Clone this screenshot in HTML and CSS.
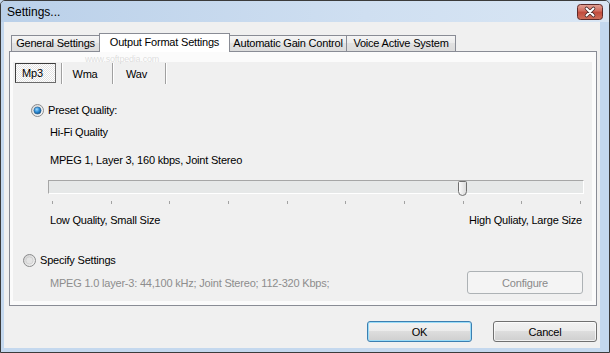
FILE: index.html
```html
<!DOCTYPE html>
<html lang="en">
<head>
    <meta charset="UTF-8">
    <title>Settings...</title>
    <link rel="stylesheet" href="styles.css">
</head>
<body>
    <div class="window">
        <!-- Title bar -->
        <div class="titlebar">
            <span class="title">Settings...</span>
            <svg class="close" width="26" height="16" viewBox="0 0 26 16">
                <defs>
                    <linearGradient id="closeBg" x1="0" y1="0" x2="0" y2="1">
                        <stop offset="0" stop-color="#e3a497"/>
                        <stop offset="0.45" stop-color="#d06a5c"/>
                        <stop offset="0.5" stop-color="#c04a3b"/>
                        <stop offset="1" stop-color="#d0705c"/>
                    </linearGradient>
                </defs>
                <rect x="0.5" y="0.5" width="25" height="15" rx="3" fill="url(#closeBg)" stroke="#5e2a2a"/>
                <path d="M9.5 4.5 L16.5 11.5 M16.5 4.5 L9.5 11.5" stroke="#4a2a2a" stroke-width="3.6" stroke-linecap="round"/>
                <path d="M9.5 4.5 L16.5 11.5 M16.5 4.5 L9.5 11.5" stroke="#fff" stroke-width="2" stroke-linecap="round"/>
            </svg>
        </div>

        <div class="client">
            <!-- Tabs -->
            <div class="tabs">
                <div class="tab tab-general">General Settings</div>
                <div class="tab tab-output active">Output Format Settings</div>
                <div class="tab tab-agc">Automatic Gain Control</div>
                <div class="tab tab-voice">Voice Active System</div>
            </div>

            <div class="panel">
                <div class="page">
                    <div class="subtabs">
                        <div class="subtab subtab-mp3"><div class="pressed">Mp3</div></div>
                        <div class="subtab subtab-wma">Wma</div>
                        <div class="subtab subtab-wav">Wav</div>
                    </div>

                    <div class="option option-preset">
                        <svg width="13" height="13" viewBox="0 0 13 13">
                            <defs>
                                <radialGradient id="dot" cx="0.4" cy="0.35" r="0.7">
                                    <stop offset="0" stop-color="#9fd9ff"/>
                                    <stop offset="0.5" stop-color="#2f8fd8"/>
                                    <stop offset="1" stop-color="#0d4f8a"/>
                                </radialGradient>
                                <linearGradient id="ring" x1="0" y1="0" x2="1" y2="1">
                                    <stop offset="0" stop-color="#d8d8d8"/>
                                    <stop offset="1" stop-color="#fbfbfb"/>
                                </linearGradient>
                            </defs>
                            <circle cx="6.5" cy="6.5" r="6" fill="url(#ring)" stroke="#8a8b8c"/>
                            <circle cx="6.5" cy="6.5" r="3.6" fill="url(#dot)" stroke="#2a5a86" stroke-width="0.6"/>
                        </svg>
                        <span>Preset Quality:</span>
                    </div>

                    <div class="info hifi">Hi-Fi Quality</div>
                    <div class="info mpeg">MPEG 1, Layer 3, 160 kbps, Joint Stereo</div>

                    <div class="slider">
                        <div class="track"></div>
                        <svg class="thumb" width="9" height="15" viewBox="0 0 9 15">
                            <defs>
                                <linearGradient id="thumbBg" x1="0" y1="0" x2="1" y2="0">
                                    <stop offset="0" stop-color="#fdfdfd"/>
                                    <stop offset="1" stop-color="#d9d9d9"/>
                                </linearGradient>
                            </defs>
                            <path d="M1.5 0.5 H7.5 Q8.5 0.5 8.5 1.5 V10.5 Q8.5 14.5 4.5 14.5 Q0.5 14.5 0.5 10.5 V1.5 Q0.5 0.5 1.5 0.5 Z" fill="url(#thumbBg)" stroke="#6f6f6f"/>
                        </svg>
                    </div>
                    <div class="ticks">
                        <span class="tick"></span><span class="tick"></span><span class="tick"></span>
                        <span class="tick"></span><span class="tick"></span><span class="tick"></span>
                        <span class="tick"></span><span class="tick"></span><span class="tick"></span>
                        <span class="tick"></span>
                    </div>
                    <div class="scale-labels">
                        <span>Low Quality, Small Size</span>
                        <span>High Quliaty, Large Size</span>
                    </div>

                    <div class="option option-specify">
                        <svg width="13" height="13" viewBox="0 0 13 13">
                            <defs>
                                <linearGradient id="ringOff" x1="0" y1="0" x2="1" y2="1">
                                    <stop offset="0" stop-color="#cfcfcf"/>
                                    <stop offset="1" stop-color="#f7f7f7"/>
                                </linearGradient>
                            </defs>
                            <circle cx="6.5" cy="6.5" r="6" fill="url(#ringOff)" stroke="#8a8b8c"/>
                            <circle cx="6.5" cy="6.5" r="3.6" fill="#e4e4e4" stroke="#c4c4c4" stroke-width="0.6"/>
                        </svg>
                        <span>Specify Settings</span>
                    </div>

                    <div class="custom-row">
                        <span class="custom-info">MPEG 1.0 layer-3: 44,100 kHz; Joint Stereo; 112-320 Kbps;</span>
                        <button class="configure" disabled>Configure</button>
                    </div>
                </div>
            </div>

            <!-- Dialog buttons -->
            <div class="actions">
                <button class="btn btn-default">OK</button>
                <button class="btn btn-cancel">Cancel</button>
            </div>
        </div>

        <div class="watermark-url">www.softpedia.com</div>
    </div>
</body>
</html>
```

FILE: styles.css
```css
* {
    margin: 0;
    padding: 0;
    box-sizing: border-box;
}

body {
    width: 610px;
    height: 353px;
    overflow: hidden;
    font-family: "Liberation Sans", Arial, sans-serif;
    font-size: 11px;
    letter-spacing: -0.2px;
    color: #000;
    background: #c4d8ee;
}

/* Window frame */
.window {
    width: 610px;
    height: 353px;
    border: 1px solid #3b3b3b;
    border-radius: 5px 5px 0 0;
    background: #c4d8ee;
    display: flex;
    flex-direction: column;
    position: relative;
    overflow: hidden;
}

.titlebar {
    height: 21px;
    display: flex;
    align-items: center;
    justify-content: space-between;
    padding: 1px 6px 0 6px;
    background: linear-gradient(to right, #bad0e9, #cfdff1 60%, #d9e6f4);
}

.title {
    font-size: 12px;
    letter-spacing: 0;
}

.client {
    height: 326px;
    margin: 0 9px 0 3px;
    background: #f0f0f0;
}

/* Tabs */
.tabs {
    display: flex;
    align-items: flex-end;
    height: 29px;
    padding-left: 7px;
}

.tab {
    height: 16px;
    line-height: 15px;
    text-align: center;
    white-space: nowrap;
    border: 1px solid #898c95;
    border-bottom: none;
    margin-left: -1px;
    background: linear-gradient(#f5f5f5, #ebebeb 50%, #e1e1e1 50%, #dcdcdc);
}

.tab-general {
    width: 89px;
    margin-left: 0;
}

.tab-output {
    width: 131px;
}

.tab-agc {
    width: 118px;
}

.tab-voice {
    width: 110px;
}

.tab.active {
    height: 19px;
    line-height: 17px;
    margin-bottom: -1px;
    background: #fff;
    position: relative;
    z-index: 1;
}

.panel {
    margin-left: 5px;
    width: 588px;
    height: 255px;
    border: 1px solid #898c95;
    background: #fbfbfb;
    padding: 10px 4px 4px 3px;
}

.page {
    height: 100%;
    background: #f0f0f0;
    display: flex;
    flex-direction: column;
}

/* Format buttons */
.subtabs {
    display: flex;
    height: 21px;
    margin: 1px 0 0 2px;
}

.subtab {
    height: 21px;
    display: flex;
    align-items: center;
    justify-content: center;
    border-right: 1px solid #a0a0a0;
    box-shadow: 1px 0 0 #fff;
}

.subtab-mp3 {
    width: 47px;
    align-items: flex-start;
    justify-content: flex-start;
}

.subtab-wma {
    width: 51px;
    padding-right: 4px;
}

.subtab-wav {
    width: 53px;
    padding-right: 5px;
}

.pressed {
    width: 41px;
    height: 20px;
    padding: 3px 0 0 6px;
    border: 1px solid #6a6a6a;
    border-top-color: #3c3c3c;
    border-left-color: #3c3c3c;
    background: repeating-conic-gradient(#ffffff 0 25%, #e2e2e2 0 50%) 0 0 / 2px 2px;
}

/* Options */
.option {
    display: flex;
    align-items: center;
    gap: 4px;
    height: 14px;
}

.option-preset {
    margin: 19px 0 0 18px;
}

.option-specify {
    margin: 26px 0 0 10px;
}

.info {
    margin-left: 37px;
    height: 14px;
    line-height: 14px;
}

.hifi {
    margin-top: 8px;
}

.mpeg {
    margin-top: 14px;
}

/* Quality slider */
.slider {
    margin: 13px 0 0 35px;
    width: 536px;
    height: 14px;
    position: relative;
}

.track {
    height: 14px;
    border: 1px solid #a6a6a6;
    border-bottom-color: #fff;
    border-right-color: #fff;
    background: #e6e8e8;
}

.thumb {
    position: absolute;
    left: 410px;
    top: 1px;
}

.ticks {
    display: flex;
    justify-content: space-between;
    width: 529px;
    height: 3px;
    margin: 7px 0 0 39px;
}

.tick {
    width: 1px;
    height: 3px;
    background: #a2a2a2;
}

.scale-labels {
    display: flex;
    justify-content: space-between;
    height: 14px;
    line-height: 14px;
    margin: 9px 10px 0 37px;
}

.custom-row {
    display: flex;
    align-items: center;
    justify-content: space-between;
    height: 23px;
    margin: 4px 9px 0 37px;
}

.custom-info {
    color: #8d8d8d;
}

.configure {
    width: 116px;
    height: 23px;
    font: inherit;
    letter-spacing: inherit;
    color: #8a8a8a;
    border: 1px solid #adb2b5;
    border-radius: 3px;
    background: #f4f4f4;
}

/* Dialog buttons */
.actions {
    display: flex;
    justify-content: flex-end;
    gap: 21px;
    margin: 15px 3px 0 0;
}

.btn {
    height: 21px;
    font: inherit;
    letter-spacing: inherit;
    color: #000;
    border: 1px solid #707070;
    border-radius: 3px;
    background: linear-gradient(#f2f2f2, #ebebeb 50%, #dddddd 50%, #cfcfcf);
    box-shadow: inset 0 0 0 1px rgba(255, 255, 255, 0.7);
}

.btn-default {
    width: 105px;
    border-color: #3c7fb1;
    box-shadow: inset 0 0 0 1px #9adcf8;
}

.btn-cancel {
    width: 104px;
}

/* Screenshot watermark */
.watermark-url {
    position: absolute;
    left: 84px;
    top: 53px;
    font-size: 9px;
    color: rgba(150, 150, 150, 0.3);
    pointer-events: none;
}
```
